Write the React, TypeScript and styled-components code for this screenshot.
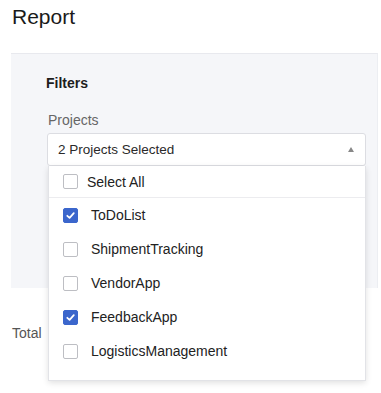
import React, { useState } from "react";
import styled, { createGlobalStyle } from "styled-components";

const GlobalStyle = createGlobalStyle`
  html, body {
    margin: 0;
    padding: 0;
    background: #ffffff;
    font-family: "Liberation Sans", Arial, sans-serif;
    color: #222;
  }
`;

const projects = [
  { name: "ToDoList", checked: true },
  { name: "ShipmentTracking", checked: false },
  { name: "VendorApp", checked: false },
  { name: "FeedbackApp", checked: true },
  { name: "LogisticsManagement", checked: false },
];

const App: React.FC = () => {
  const [items, setItems] = useState(projects);

  const toggle = (idx: number) => {
    setItems(items.map((p, i) => (i === idx ? { ...p, checked: !p.checked } : p)));
  };

  const allChecked = items.every((p) => p.checked);
  const count = items.filter((p) => p.checked).length;

  return (
    <Page>
      <GlobalStyle />
      <Title>Report</Title>
      <Panel>
        <SectionTitle>Filters</SectionTitle>
        <Label>Projects</Label>
        <SelectWrap>
          <SelectBox>
            <span>{count} Projects Selected</span>
            <Caret />
          </SelectBox>
          <Menu>
            <AllRow onClick={() => setItems(items.map((p) => ({ ...p, checked: !allChecked })))}>
              <Check checked={allChecked} />
              <ItemText $gap={9}>Select All</ItemText>
            </AllRow>
            {items.map((p, i) => (
              <Row key={p.name} onClick={() => toggle(i)}>
                <Check checked={p.checked} />
                <ItemText $gap={13}>{p.name}</ItemText>
              </Row>
            ))}
          </Menu>
        </SelectWrap>
      </Panel>
      <Total>Total</Total>
    </Page>
  );
};

const Check: React.FC<{ checked: boolean }> = ({ checked }) => (
  <Box $checked={checked}>
    {checked && (
      <svg width="11" height="11" viewBox="0 0 12 12">
        <path d="M2.5 6.3 L5 8.6 L9.6 3.4" fill="none" stroke="#fff" strokeWidth="1.9" strokeLinecap="round" strokeLinejoin="round" />
      </svg>
    )}
  </Box>
);

const Page = styled.div`
  width: 381px;
  height: 393px;
  overflow: hidden;
`;

const Title = styled.h1`
  margin: 0;
  padding: 5px 12px 0;
  height: 48px;
  font-size: 21px;
  font-weight: 400;
  line-height: 24px;
  color: #1a1a1a;
`;

const Panel = styled.div`
  margin: 0 3px 0 11px;
  height: 235px;
  box-sizing: border-box;
  background: #f5f6f9;
  border-top: 1px solid #e8e9ee;
  border-right: 1px solid #eceef2;
  padding: 21px 11px 0 35px;
`;

const SectionTitle = styled.div`
  font-size: 14px;
  font-weight: 700;
  line-height: 17px;
  color: #1d1d1d;
`;

const Label = styled.div`
  margin-top: 20px;
  margin-left: 2px;
  font-size: 14px;
  line-height: 17px;
  color: #666;
`;

const SelectWrap = styled.div`
  position: relative;
  margin-top: 4px;
  margin-left: 1px;
`;

const SelectBox = styled.div`
  height: 33px;
  box-sizing: border-box;
  background: #fff;
  border: 1px solid #dcdde2;
  border-radius: 3px;
  display: flex;
  align-items: center;
  justify-content: space-between;
  padding: 0 11px 0 10px;
  font-size: 13.5px;
  color: #2a2a2a;
`;

const Caret = styled.span`
  width: 0;
  height: 0;
  border-left: 3.5px solid transparent;
  border-right: 3.5px solid transparent;
  border-bottom: 5px solid #888;
  margin-top: -1px;
`;

const Menu = styled.div`
  position: absolute;
  top: 33px;
  left: 1px;
  right: 0;
  background: #fff;
  border: 1px solid #e2e3e7;
  border-top: none;
  box-shadow: 0 2px 6px rgba(0, 0, 0, 0.12);
  padding-bottom: 12px;
  z-index: 10;
`;

const Row = styled.div`
  height: 34px;
  display: flex;
  align-items: center;
  padding-left: 14px;
  cursor: pointer;
`;

const AllRow = styled(Row)`
  height: 31px;
  border-bottom: 1px solid #ececef;
`;

const Box = styled.span<{ $checked: boolean }>`
  width: 15px;
  height: 15px;
  box-sizing: border-box;
  border-radius: 2px;
  border: 1px solid ${(p) => (p.$checked ? "#3b66cc" : "#bdbec3")};
  background: ${(p) => (p.$checked ? "#3b66cc" : "#fff")};
  display: flex;
  align-items: center;
  justify-content: center;
  flex-shrink: 0;
`;

const ItemText = styled.span<{ $gap: number }>`
  margin-left: ${(p) => p.$gap}px;
  font-size: 14px;
  color: #222;
`;

const Total = styled.div`
  margin-top: 37px;
  padding-left: 12px;
  font-size: 14px;
  line-height: 17px;
  color: #555;
`;

export default App;
